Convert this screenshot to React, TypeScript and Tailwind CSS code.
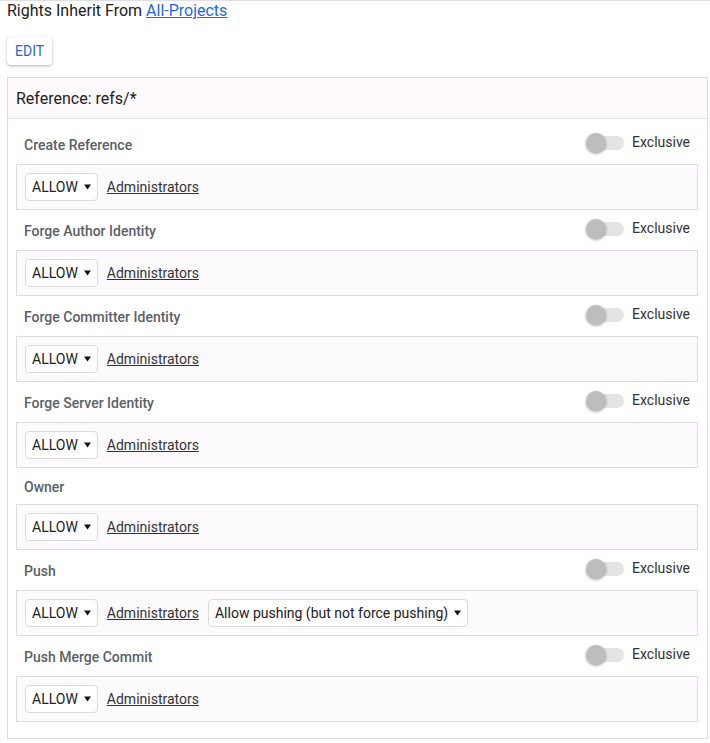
import React from "react";

type Perm = { name: string; exclusive: boolean; extra?: string };

const perms: Perm[] = [
  { name: "Create Reference", exclusive: true },
  { name: "Forge Author Identity", exclusive: true },
  { name: "Forge Committer Identity", exclusive: true },
  { name: "Forge Server Identity", exclusive: true },
  { name: "Owner", exclusive: false },
  { name: "Push", exclusive: true, extra: "Allow pushing (but not force pushing)" },
  { name: "Push Merge Commit", exclusive: true },
];

function Arrow() {
  return (
    <svg width="7" height="6" viewBox="0 0 7 6" className="shrink-0">
      <path d="M0 0.5 L7 0.5 L3.5 5.5 Z" fill="#111" />
    </svg>
  );
}

function FakeSelect({ label }: { label: string }) {
  return (
    <div className="flex h-[28px] items-center gap-[6px] rounded-[4px] border border-[#dcdcdc] bg-white pl-[6px] pr-[6px] text-[14px] text-[#212121]">
      <span>{label}</span>
      <Arrow />
    </div>
  );
}

function Toggle() {
  return (
    <div className="flex items-center gap-[8px] pb-[3px]">
      <div className="relative h-[14px] w-[36px] rounded-full bg-[#e4e4e4]">
        <div className="absolute left-[-2px] top-[-3px] h-[20px] w-[20px] rounded-full bg-[#bdbdbd] shadow-[0_1px_3px_rgba(0,0,0,0.35)]" />
      </div>
      <span className="text-[14px] text-[#333]">Exclusive</span>
    </div>
  );
}

export default function App() {
  return (
    <div
      className="min-h-[743px] w-[710px] border-t border-[#dfe0e6] bg-white text-[#212121]"
      style={{ fontFamily: "Roboto, 'Liberation Sans', sans-serif" }}
    >
      <div className="pl-[7px] pr-[2px]">
        <div className="h-[20px] text-[16px] leading-[20px]">
          Rights Inherit From{" "}
          <a className="text-[#2a66d9] underline" href="#">
            All-Projects
          </a>
        </div>
        <div className="mt-[16px]">
          <button className="h-[28px] rounded-[4px] bg-white px-[8px] text-[14px] text-[#2a66d9] shadow-[0_1px_3px_rgba(0,0,0,0.3)]">
            EDIT
          </button>
        </div>
        <div className="mt-[12px] border border-[#dddddd] bg-white">
          <div className="flex h-[41px] items-center border-b border-dotted border-[#cfcfcf] bg-[#fdf9fd] px-[8px] pt-[2px] text-[16px]">
            Reference: refs/*
          </div>
          <div className="pb-[16px] pl-[8px] pr-[9px] pt-[5px]">
            {perms.map((p) => (
              <div key={p.name}>
                <div
                  className={
                    "flex items-center justify-between px-[8px] " +
                    (p.exclusive ? "h-[40px]" : "h-[36px]")
                  }
                >
                  <span className="pt-[2px] text-[14px] font-medium text-[#5b5f66]">{p.name}</span>
                  {p.exclusive && <Toggle />}
                </div>
                <div className="flex h-[46px] items-center gap-[9px] border border-[#dddddd] bg-[#fdfafd] px-[8px]">
                  <FakeSelect label="ALLOW" />
                  <a className="text-[14px] text-[#333] underline" href="#">
                    Administrators
                  </a>
                  {p.extra && <FakeSelect label={p.extra} />}
                </div>
              </div>
            ))}
          </div>
        </div>
      </div>
    </div>
  );
}
